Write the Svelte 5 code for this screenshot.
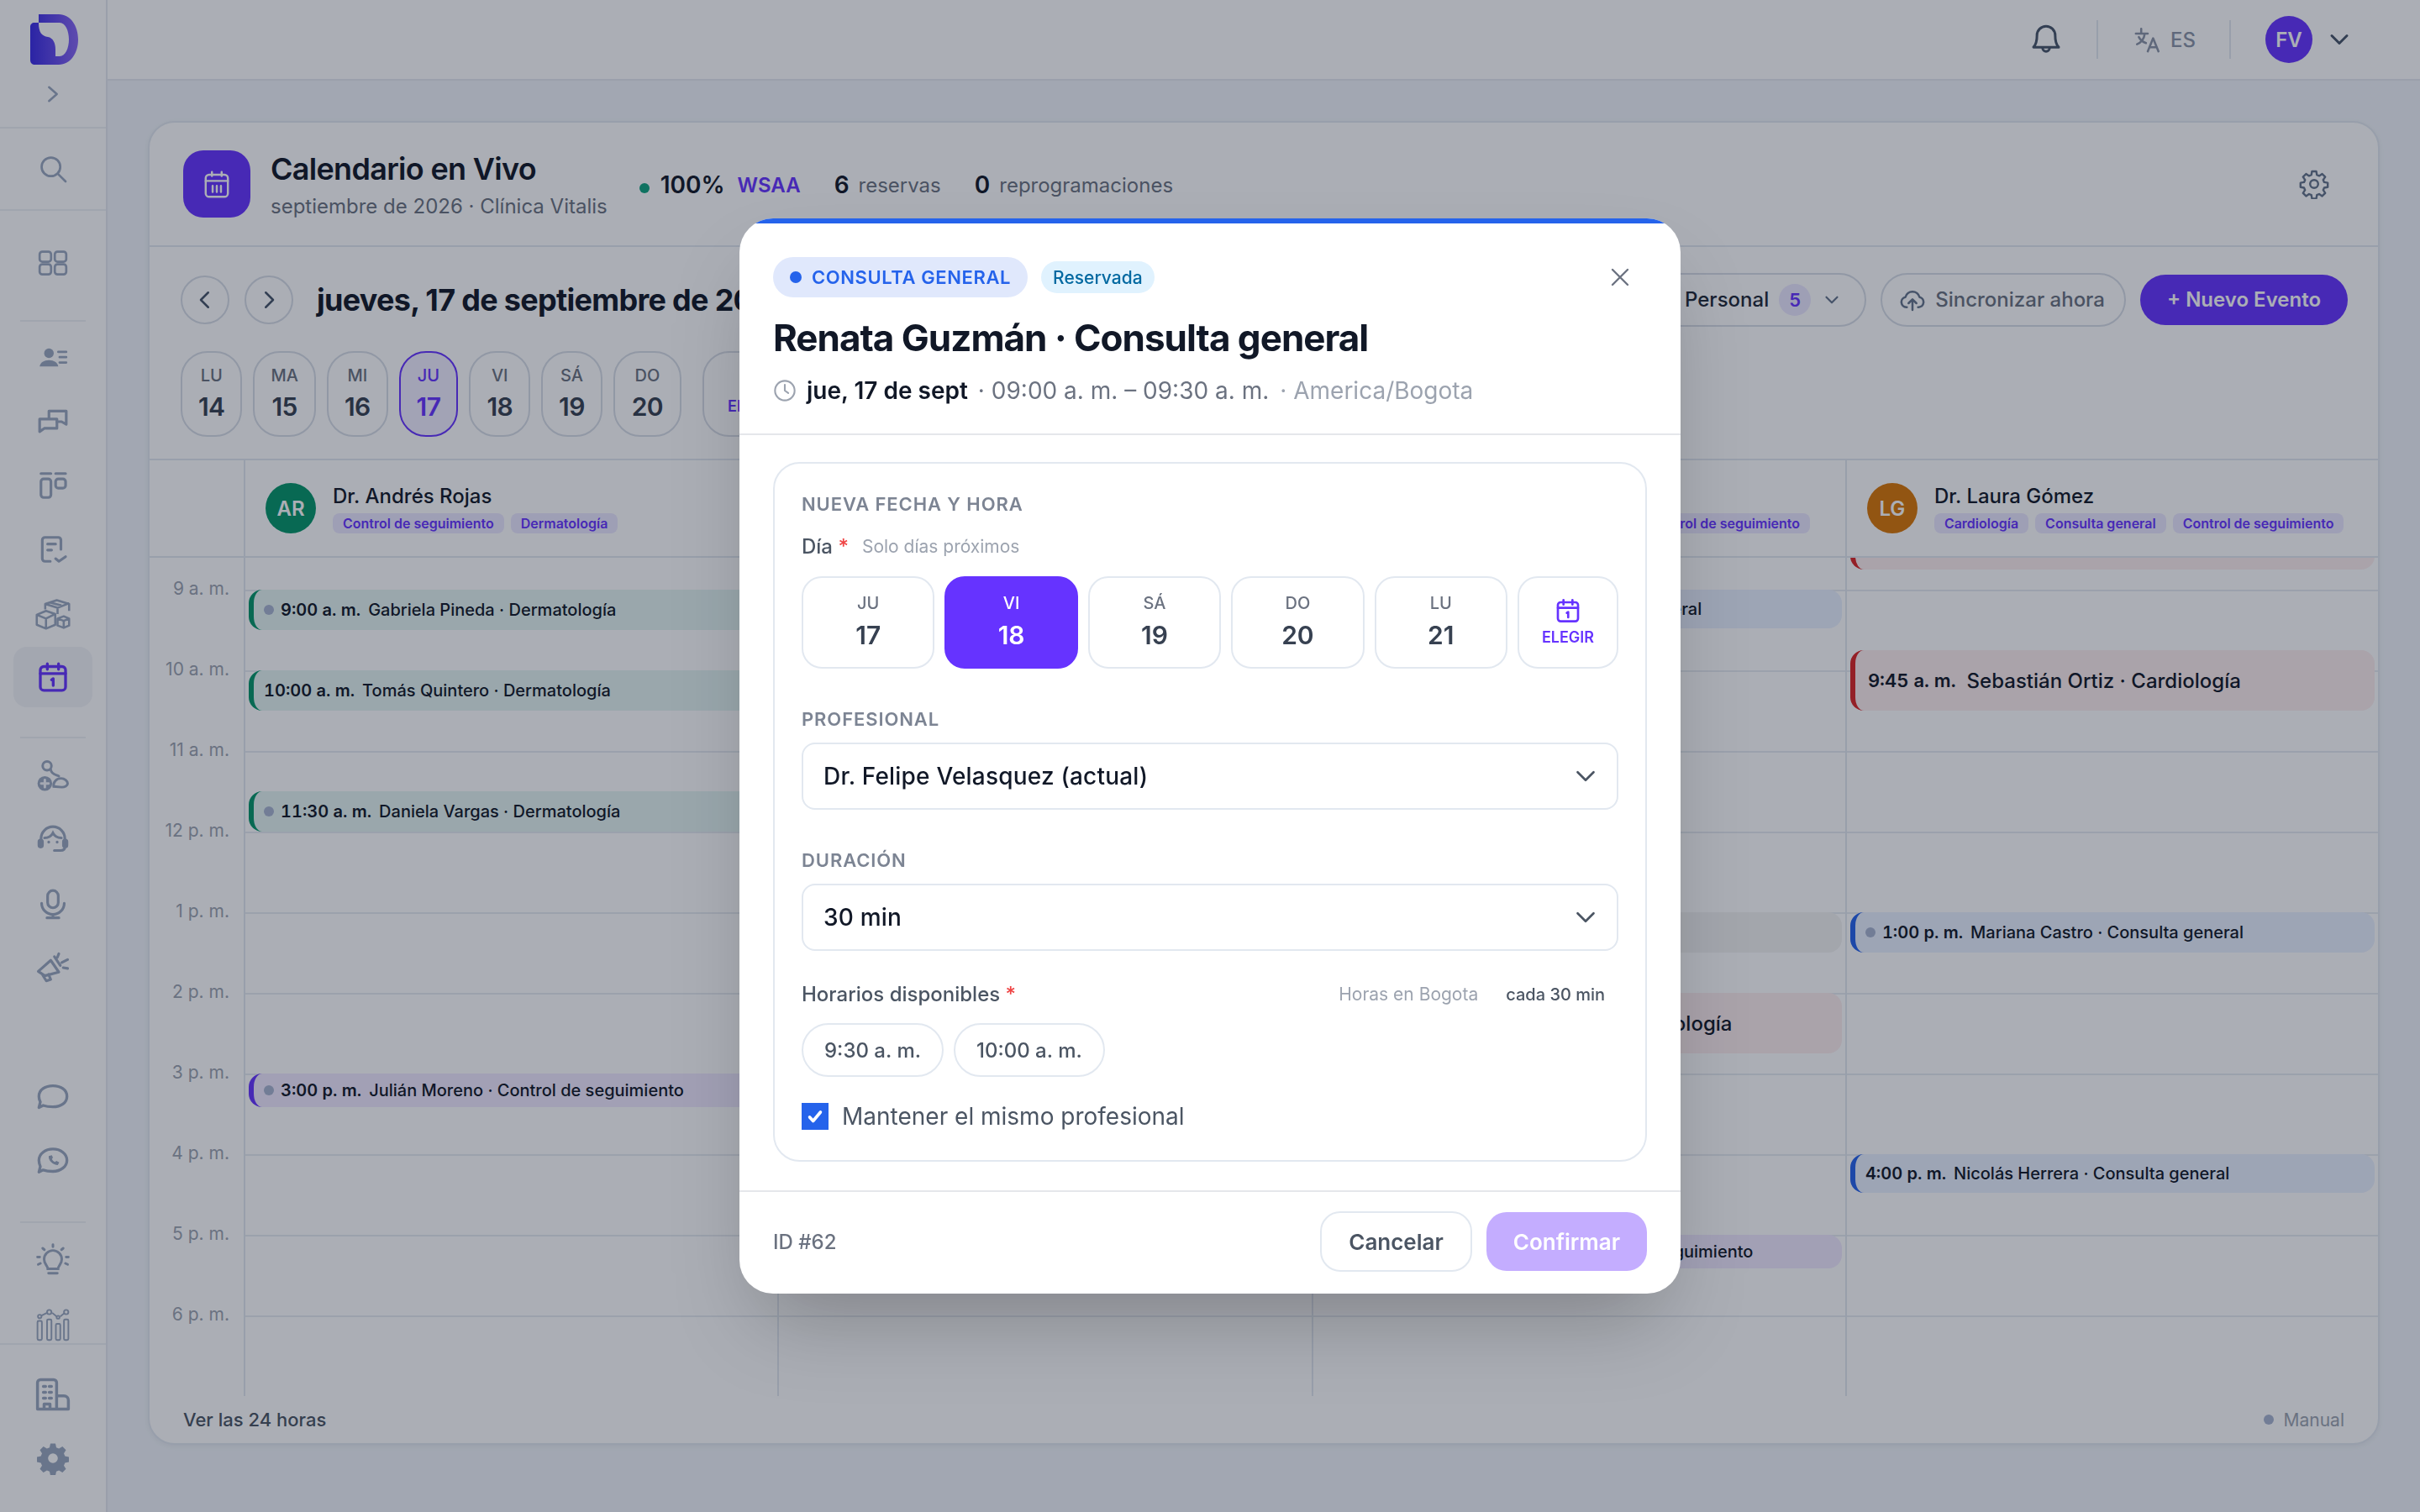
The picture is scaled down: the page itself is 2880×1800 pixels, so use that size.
<script lang="ts">
  type Ev = { at: number; mins: number; time: string; text: string; tone: string; dot?: boolean; big?: boolean };

  const START = 9;
  const HOUR = 96;
  const hours = ["9 a. m.", "10 a. m.", "11 a. m.", "12 p. m.", "1 p. m.", "2 p. m.", "3 p. m.", "4 p. m.", "5 p. m.", "6 p. m."];
  const weekDays = [
    ["LU", 14],
    ["MA", 15],
    ["MI", 16],
    ["JU", 17],
    ["VI", 18],
    ["SÁ", 19],
    ["DO", 20]
  ];
  const pickDays = [
    ["JU", 17],
    ["VI", 18],
    ["SÁ", 19],
    ["DO", 20],
    ["LU", 21]
  ];

  const columns: { initials: string; color: string; name: string; tags: string[]; events: Ev[] }[] = [
    {
      initials: "AR",
      color: "#059669",
      name: "Dr. Andrés Rojas",
      tags: ["Control de seguimiento", "Dermatología"],
      events: [
        { at: 9, mins: 30, time: "9:00 a. m.", text: "Gabriela Pineda · Dermatología", tone: "green", dot: true },
        { at: 10, mins: 30, time: "10:00 a. m.", text: "Tomás Quintero · Dermatología", tone: "green" },
        { at: 11.5, mins: 30, time: "11:30 a. m.", text: "Daniela Vargas · Dermatología", tone: "green", dot: true },
        { at: 15, mins: 25, time: "3:00 p. m.", text: "Julián Moreno · Control de seguimiento", tone: "purple", dot: true }
      ]
    },
    {
      initials: "FV",
      color: "#6633ff",
      name: "Dr. Felipe Velasquez",
      tags: ["Consulta general"],
      events: [{ at: 9, mins: 30, time: "9:00 a. m.", text: "Renata Guzmán · Consulta general", tone: "blue" }]
    },
    {
      initials: "CT",
      color: "#2563eb",
      name: "Dra. Camila Torres",
      tags: ["Cardiología", "Consulta general", "Control de seguimiento"],
      events: [
        { at: 9, mins: 29, time: "9:00 a. m.", text: "Paula Benavides · Consulta general", tone: "blue" },
        { at: 13, mins: 30, time: "1:00 p. m.", text: "", tone: "gray" },
        { at: 14, mins: 45, time: "2:00 p. m.", text: "Mateo Hernández · Cardiología", tone: "red", big: true },
        { at: 17, mins: 25, time: "5:00 p. m.", text: "Lucía Fernández · Control de seguimiento", tone: "purple" }
      ]
    },
    {
      initials: "LG",
      color: "#d97706",
      name: "Dr. Laura Gómez",
      tags: ["Cardiología", "Consulta general", "Control de seguimiento"],
      events: [
        { at: 8, mins: 45, time: "8:00 a. m.", text: "", tone: "red", big: true },
        { at: 9.75, mins: 45, time: "9:45 a. m.", text: "Sebastián Ortiz · Cardiología", tone: "red", big: true },
        { at: 13, mins: 30, time: "1:00 p. m.", text: "Mariana Castro · Consulta general", tone: "blue", dot: true },
        { at: 16, mins: 29, time: "4:00 p. m.", text: "Nicolás Herrera · Consulta general", tone: "blue" }
      ]
    }
  ];

  let pickedDay = $state(18);
  let keepPro = $state(true);
  let slot = $state("");

  const topOf = (at: number) => 38 + (at - START) * HOUR;
</script>

{#snippet chevron(size: number, color: string, sw = 2)}
  <svg width={size} height={size} viewBox="0 0 24 24" fill="none" stroke={color} stroke-width={sw} stroke-linecap="round" stroke-linejoin="round"><path d="m6 9 6 6 6-6" /></svg>
{/snippet}

{#snippet calIcon(size: number, color: string, sw: number)}
  <svg width={size} height={size} viewBox="0 0 24 24" fill="none" stroke={color} stroke-width={sw} stroke-linecap="round" stroke-linejoin="round">
    <rect x="3" y="4.5" width="18" height="17" rx="2.5" />
    <path d="M8 2.5v4M16 2.5v4M3 9.5h18" />
    <path d="m11 14 1.2-.8V18" />
  </svg>
{/snippet}

<div class="app">
  <aside class="sidebar">
    <div class="brand">
      <svg class="logo" width="57" height="60" viewBox="0 0 57 60">
        <defs>
          <linearGradient id="logoFill" x1="0" x2="1" y1="0.5" y2="0.5">
            <stop offset="0" stop-color="#3a2be6" />
            <stop offset="1" stop-color="#8a68f5" />
          </linearGradient>
        </defs>
        <path fill="url(#logoFill)" fill-rule="evenodd" d="M10 0H34C48 0 57 14 57 30C57 46 48 60 34 60H6C2 60 0 58 0 54V15C0 12 2 10 5 10H10ZM10 10C10 22 14 26 21 27C27 28 30 34 30 42V50H35C42 50 46 40 46 30C46 20 42 10 35 10Z" />
      </svg>
      <svg width="28" height="28" viewBox="0 0 24 24" fill="none" stroke="#9aa8bf" stroke-width="2.200" stroke-linecap="round" stroke-linejoin="round"><path d="m8 5 8 7-8 7" /></svg>
    </div>
    <div class="search-slot">
      <svg width="38" height="38" viewBox="0 0 24 24" fill="none" stroke="#9aa8bf" stroke-width="1.7" stroke-linecap="round"><circle cx="10.5" cy="10.5" r="7" /><path d="m16 16 5.500 5.500" /></svg>
    </div>
    <nav class="nav">
      <a class="item first" href="#dash" aria-label="Inicio">
        <svg width="38" height="38" viewBox="0 0 24 24" fill="none" stroke="#9aa8bf" stroke-width="1.7"><rect x="2" y="3.5" width="8.6" height="7.6" rx="2" /><rect x="13.4" y="3.5" width="8.6" height="7.6" rx="2" /><rect x="2" y="13" width="8.6" height="7.6" rx="2" /><rect x="13.4" y="13" width="8.6" height="7.6" rx="2" /></svg>
      </a>
      <div class="sep"></div>
      <a class="item" href="#contacts" aria-label="Contactos">
        <svg width="38" height="38" viewBox="0 0 24 24" fill="none" stroke="#9aa8bf" stroke-width="1.7" stroke-linecap="round"><circle cx="9" cy="8.5" r="3.6" fill="#9aa8bf" stroke="none" /><path d="M2 18.500c.4-3 3.300-4.800 7-4.800s6.600 1.800 7 4.800z" fill="#9aa8bf" stroke="none" /><path d="M16 7.500h6M17 11.500h5M17 15.500h5" /></svg>
      </a>
      <a class="item" href="#inbox" aria-label="Conversaciones">
        <svg width="38" height="38" viewBox="0 0 24 24" fill="none" stroke="#9aa8bf" stroke-width="2" stroke-linejoin="round"><path d="M9 9.500V4h13v10l-3.500-2H14" /><path d="M15 10v7H5.500L2 19.500V10z" /></svg>
      </a>
      <a class="item" href="#board" aria-label="Tablero">
        <svg width="38" height="38" viewBox="0 0 24 24" fill="none" stroke="#9aa8bf" stroke-width="2" stroke-linecap="round"><path d="M3 3h7.500M14 3h7.500" /><rect x="3" y="7" width="7.500" height="14" rx="2" /><rect x="14" y="7" width="7.500" height="7" rx="2" /></svg>
      </a>
      <a class="item" href="#tasks" aria-label="Tareas">
        <svg width="38" height="38" viewBox="0 0 24 24" fill="none" stroke="#9aa8bf" stroke-width="2" stroke-linecap="round" stroke-linejoin="round"><path d="M10 21H6a2 2 0 0 1-2-2V5a2 2 0 0 1 2-2h10a2 2 0 0 1 2 2v7" /><path d="M8 8h6M8 12.500h3" /><path d="m14 19 2.500 2 5-3.500" /></svg>
      </a>
      <a class="item" href="#stock" aria-label="Inventario">
        <svg width="44" height="44" viewBox="0 0 24 24" fill="none" stroke="#9aa8bf" stroke-width="1.4" stroke-linejoin="round"><path d="m1.500 13 6-2.500 6 2v7l-6 2.500-6-2.500zM1.500 13l6 2.500 6-3M7.500 15.500v7" /><path d="m7 9.500 0-3.500 7.500-2.500 8 2.500v4.500M7 6l8 2.500 7.500-3M15 8.500v4M10 5l7.500 2" /><path d="m15 15.500 4-1.500 3.500 1.500v4.500L19 21.500 15 20zM15 15.500l4 1.500 3.500-1.500M19 17v4.500" /></svg>
      </a>
      <a class="item active" href="#calendar" aria-label="Calendario">
        {@render calIcon(40, "#6633ff", 2)}
      </a>
      <div class="sep mid"></div>
      <a class="item" href="#doctors" aria-label="Profesionales">
        <svg width="42" height="42" viewBox="0 0 24 24" fill="none" stroke="#9aa8bf" stroke-width="1.700" stroke-linecap="round"><circle cx="8" cy="5" r="3" /><path d="M10.500 7.500c.5 3.500 3.500 3.500 5.500 4.500" /><circle cx="6.500" cy="17" r="5" fill="#9aa8bf" stroke="none" /><path d="M4 17h5M6.500 14.500v5" stroke="#f4f6fa" /><path d="M12.500 19c-.5-3 2-5.500 5-5.500 2.500 0 4.500 2 4.500 3.500 0 1.500-2 2.500-4 2.500z" /></svg>
      </a>
      <a class="item" href="#support" aria-label="Soporte">
        <svg width="40" height="40" viewBox="0 0 24 24" fill="none" stroke="#9aa8bf" stroke-width="1.900" stroke-linecap="round"><path d="M3.500 14v-3a8.500 8.500 0 0 1 17 0v3" /><path d="M6 10.500c3 0 5-1.500 6-3.500 1 2 3 3.500 6 3.500" /><rect x="2" y="12" width="2.500" height="5" rx="1.200" fill="#9aa8bf" /><rect x="19.500" y="12" width="2.500" height="5" rx="1.200" fill="#9aa8bf" /><path d="M20.500 17c0 1.800-1.500 2.500-3 2.500H13" /><path d="M9 13.500h.01M15 13.500h.01" stroke-width="2" /></svg>
      </a>
      <a class="item" href="#voice" aria-label="Voz">
        <svg width="38" height="38" viewBox="0 0 24 24" fill="none" stroke="#9aa8bf" stroke-width="2" stroke-linecap="round"><rect x="8" y="2" width="8" height="13" rx="4" /><path d="M3.500 11.500a8.500 8.500 0 0 0 17 0M12 20v2.500M7.500 22.500h9" /></svg>
      </a>
      <a class="item" href="#campaigns" aria-label="Campañas">
        <svg width="42" height="42" viewBox="0 0 24 24" fill="none" stroke="#9aa8bf" stroke-width="1.800" stroke-linecap="round" stroke-linejoin="round"><path d="M2 14.500 10.500 7l5.500 8-9.500 2.500zM5 17l2.500 4 3-1-1.500-3.500" /><path d="M13 4.500 17 10.500M15 5l1-2.500M18 8.500l4-2M19 12l3 .5" /></svg>
      </a>
      <div class="nav-gap"></div>
      <a class="item" href="#chat" aria-label="Chat">
        <svg width="40" height="40" viewBox="0 0 24 24" fill="none" stroke="#9aa8bf" stroke-width="2" stroke-linejoin="round"><path d="M12 4c5.500 0 10 2.800 10 7.500S17.500 19 12 19c-2.200 0-5-.3-7-1l-3 1.500 1-4C2.300 14.300 2 13 2 11.500 2 6.800 6.500 4 12 4z" /></svg>
      </a>
      <a class="item" href="#whatsapp" aria-label="WhatsApp">
        <svg width="40" height="40" viewBox="0 0 24 24" fill="none" stroke="#9aa8bf" stroke-width="2" stroke-linejoin="round"><path d="M12 3.500c5.500 0 10 3.500 10 8s-4.500 8-10 8c-2.200 0-5-.3-7-1l-3 1.500 1-4C2.300 14.300 2 13 2 11.500c0-4.500 4.500-8 10-8z" /><path d="M9 8.500c-.5 3 3 6.500 6.500 6.500l1-2-2-1-1 .8c-1-.4-1.800-1.200-2.200-2.200l.7-1-.8-1.700z" fill="#9aa8bf" stroke="none" /></svg>
      </a>
      <div class="sep low"></div>
      <a class="item" href="#ideas" aria-label="Ideas">
        <svg width="42" height="42" viewBox="0 0 24 24" fill="none" stroke="#9aa8bf" stroke-width="1.700" stroke-linecap="round"><path d="M8.500 18c0-2-2.500-3-2.500-6.500a6 6 0 0 1 12 0c0 3.500-2.500 4.500-2.500 6.500z" /><path d="M9 21h6M12 1.500v1.500M5 4l1.200 1M19 4l-1.200 1M1.500 10H3M21 10h1.500M2 15l1.500-.7M22 15l-1.500-.7" /></svg>
      </a>
      <a class="item" href="#stats" aria-label="Estadísticas">
        <svg width="42" height="42" viewBox="0 0 24 24" fill="none" stroke="#9aa8bf" stroke-width="1.100" stroke-linejoin="round"><rect x="1.500" y="10" width="3" height="13" rx=".8" /><rect x="8" y="9" width="3" height="14" rx=".8" /><rect x="14" y="12" width="3" height="11" rx=".8" /><rect x="19.500" y="9" width="3" height="14" rx=".8" /><path d="m4 6.500 4-2M11.500 4.500l3 2.500M17 7l3-2.500" /><circle cx="3" cy="7" r="1.200" /><circle cx="9.500" cy="4" r="1.500" /><circle cx="15.500" cy="7.500" r="1" /><circle cx="21" cy="4" r="1.500" /></svg>
      </a>
    </nav>
    <div class="nav-bottom">
      <a class="item" href="#clinic" aria-label="Clínica">
        <svg width="42" height="42" viewBox="0 0 24 24" fill="none" stroke="#9aa8bf" stroke-width="2" stroke-linejoin="round"><path d="M1.500 22V4a2 2 0 0 1 2-2h9a2 2 0 0 1 2 2v18zM14.500 13h5a3 3 0 0 1 3 3v6h-8M6 22v-3.500h4V22" /><path d="M5.500 6.500h1.500M9.500 6.500H11M5.500 10.500h1.500M9.500 10.500H11M5.500 14.500h1.500M9.500 14.500H11" stroke-linecap="round" /></svg>
      </a>
      <a class="item" href="#settings" aria-label="Ajustes">
        <svg width="40" height="40" viewBox="0 0 24 24" fill="#9aa8bf"><path fill-rule="evenodd" d="M10.200 1.500h3.600l.6 2.800 1.900.8 2.500-1.500 2.500 2.500-1.500 2.500.8 1.900 2.800.6v3.600l-2.800.6-.8 1.900 1.500 2.500-2.500 2.500-2.500-1.500-1.900.8-.6 2.800h-3.600l-.6-2.800-1.900-.8-2.500 1.500-2.500-2.500 1.500-2.500-.8-1.900-2.800-.6v-3.600l2.800-.6.8-1.900-1.500-2.500 2.500-2.500 2.500 1.500 1.900-.8zM12 8.500a3.500 3.500 0 1 0 0 7 3.500 3.500 0 0 0 0-7z" /></svg>
      </a>
    </div>
  </aside>

  <div class="main">
    <header class="topbar">
      <svg width="40" height="40" viewBox="0 0 24 24" fill="none" stroke="#475569" stroke-width="1.800" stroke-linecap="round" stroke-linejoin="round"><path d="M12 2.500a6.500 6.500 0 0 0-6.500 6.500c0 5-1 7-2.500 8.500h18c-1.500-1.500-2.500-3.500-2.500-8.500A6.500 6.500 0 0 0 12 2.500z" /><path d="M9.500 18a2.500 2.500 0 0 0 5 0" /></svg>
      <span class="bar-sep"></span>
      <div class="lang">
        <svg width="34" height="34" viewBox="0 0 24 24" fill="none" stroke="#8a94a6" stroke-width="1.800" stroke-linecap="round" stroke-linejoin="round"><path d="M2 7h10M6.500 3v4M3 16c3.500-1.500 6-5 6.500-9M4.500 10c1 2 3 4 6 5" /><path d="m12 22 4.500-11 4.500 11M13.500 18.500h6" /></svg>
        <span>ES</span>
      </div>
      <span class="bar-sep second"></span>
      <span class="me">FV</span>
      {@render chevron(36, "#475569")}
    </header>

    <div class="content">
      <section class="card">
        <div class="card-head">
          <div class="head-icon">
            <svg width="30" height="33" viewBox="0 0 18 20" fill="none" stroke="#fff" stroke-width="1.500" stroke-linecap="round" stroke-linejoin="round"><rect x="1" y="3" width="16" height="16" rx="2.500" /><path d="M5.500 1v3M12.500 1v3M1 7.500h16M6 11v4.500M9 11v4.500M12 11v4.500" /></svg>
          </div>
          <div class="head-copy">
            <h1>Calendario en Vivo</h1>
            <p>septiembre de 2026 · Clínica Vitalis</p>
          </div>
          <div class="stats">
            <span class="live-dot"></span>
            <b class="pct">100%</b>
            <b class="wsaa">WSAA</b>
            <b class="num">6</b>
            <span class="lbl">reservas</span>
            <b class="num">0</b>
            <span class="lbl">reprogramaciones</span>
          </div>
          <svg class="head-gear" width="36" height="36" viewBox="0 0 24 24" fill="none" stroke="#64748b" stroke-width="1.600" stroke-linejoin="round"><path d="M10.300 2h3.400l.5 2.800 1.800.8 2.400-1.600 2.400 2.400-1.600 2.400.8 1.800 2.800.5v3.400l-2.800.5-.8 1.800 1.600 2.400-2.400 2.400-2.400-1.600-1.800.8-.5 2.800h-3.400l-.5-2.800-1.800-.8-2.400 1.600-2.400-2.400 1.600-2.400-.8-1.800-2.800-.5v-3.400l2.800-.5.8-1.800-1.600-2.400 2.400-2.400 2.400 1.600 1.800-.8z" /><circle cx="12" cy="12" r="3.200" /></svg>
        </div>

        <div class="toolbar">
          <div class="tool-row">
            <div class="tool-left">
              <button class="round" type="button" aria-label="Anterior">
                <svg width="30" height="30" viewBox="0 0 24 24" fill="none" stroke="#475569" stroke-width="2" stroke-linecap="round" stroke-linejoin="round"><path d="m15 5-7 7 7 7" /></svg>
              </button>
              <button class="round" type="button" aria-label="Siguiente">
                <svg width="30" height="30" viewBox="0 0 24 24" fill="none" stroke="#475569" stroke-width="2" stroke-linecap="round" stroke-linejoin="round"><path d="m9 5 7 7-7 7" /></svg>
              </button>
              <h2>jueves, 17 de septiembre de 2026</h2>
            </div>
            <div class="tool-right">
              <div class="pill staff">
                <span>Personal</span>
                <b>5</b>
                {@render chevron(26, "#64748b")}
              </div>
              <div class="pill sync">
                <svg width="32" height="32" viewBox="0 0 24 24" fill="none" stroke="#64748b" stroke-width="1.900" stroke-linecap="round" stroke-linejoin="round"><path d="M7 18.500H6.500a4.500 4.500 0 0 1-.8-8.900 6.500 6.500 0 0 1 12.600 0 4.500 4.500 0 0 1-.8 8.900H17" /><path d="M12 21v-9M8.500 15l3.500-3.500 3.500 3.500" /></svg>
                <span>Sincronizar ahora</span>
              </div>
              <button class="new-event" type="button">+ Nuevo Evento</button>
            </div>
          </div>
          <div class="week">
            {#each weekDays as [label, num]}
              <div class="wday" class:now={num === 17} class:wide={num === 20}>
                <small>{label}</small>
                <b>{num}</b>
              </div>
            {/each}
            <div class="wday pick">
              {@render calIcon(28, "#6633ff", 2)}
              <small>ELEGIR</small>
            </div>
          </div>
        </div>

        <div class="sched-head">
          <div class="corner"></div>
          {#each columns as col}
            <div class="who">
              <span class="avatar" style="background: {col.color}">{col.initials}</span>
              <div>
                <div class="who-name">{col.name}</div>
                <div class="tags">
                  {#each col.tags as tag}
                    <span>{tag}</span>
                  {/each}
                </div>
              </div>
            </div>
          {/each}
        </div>

        <div class="sched-body">
          <div class="gutter">
            {#each hours as hour}
              <div class="hour">{hour}</div>
            {/each}
          </div>
          {#each columns as col}
            <div class="col">
              {#each hours as hour}
                <div class="line" title={hour}></div>
              {/each}
              {#each col.events as ev}
                <div
                  class="event {ev.tone}"
                  class:big={ev.big}
                  style="top: {topOf(ev.at)}px; height: {(ev.mins / 60) * HOUR}px"
                >
                  {#if ev.text}
                    {#if ev.dot}<i></i>{/if}
                    <b>{ev.time}</b>
                    <span>{ev.text}</span>
                  {/if}
                </div>
              {/each}
            </div>
          {/each}
        </div>

        <div class="card-foot">
          <span class="see-all">Ver las 24 horas</span>
          <span class="legend"><i></i>Manual</span>
        </div>
      </section>
    </div>
  </div>
</div>

<div class="backdrop">
  <div class="modal" role="dialog" aria-modal="true">
    <div class="accent"></div>
    <div class="m-head">
      <div class="m-top">
        <span class="type"><i></i>CONSULTA GENERAL</span>
        <span class="state">Reservada</span>
        <button class="close" type="button" aria-label="Cerrar">
          <svg width="36" height="36" viewBox="0 0 24 24" fill="none" stroke="#6b7280" stroke-width="1.600" stroke-linecap="round"><path d="M6 6l12 12M18 6 6 18" /></svg>
        </button>
      </div>
      <h3>Renata Guzmán · Consulta general</h3>
      <div class="when">
        <svg width="28" height="28" viewBox="0 0 24 24" fill="none" stroke="#9ca3af" stroke-width="1.800" stroke-linecap="round" stroke-linejoin="round"><circle cx="12" cy="12" r="10" /><path d="M12 6v6l3.500 2.500" /></svg>
        <b>jue, 17 de sept</b>
        <span class="hours">· 09:00 a. m. – 09:30 a. m.</span>
        <span class="tz">· America/Bogota</span>
      </div>
    </div>

    <div class="m-body">
      <div class="panel">
        <div class="caps">NUEVA FECHA Y HORA</div>
        <div class="field-head">
          <span class="field-name">Día <em>*</em></span>
          <span class="hint">Solo días próximos</span>
        </div>
        <div class="days">
          {#each pickDays as [label, num]}
            <button class="day" class:on={pickedDay === num} type="button" onclick={() => (pickedDay = Number(num))}>
              <small>{label}</small>
              <b>{num}</b>
            </button>
          {/each}
          <button class="day choose" type="button">
            {@render calIcon(32, "#6633ff", 2)}
            <small>ELEGIR</small>
          </button>
        </div>

        <div class="caps gap-big">PROFESIONAL</div>
        <div class="select">
          <span>Dr. Felipe Velasquez (actual)</span>
          {@render chevron(38, "#4b5563", 1.7)}
        </div>

        <div class="caps gap-big">DURACIÓN</div>
        <div class="select">
          <span>30 min</span>
          {@render chevron(38, "#4b5563", 1.7)}
        </div>

        <div class="slots-head">
          <span class="field-name">Horarios disponibles <em>*</em></span>
          <span class="slots-meta"><span class="hint">Horas en Bogota</span><span class="every">cada 30 min</span></span>
        </div>
        <div class="slots">
          <button class="slot" class:on={slot === "9:30"} type="button" onclick={() => (slot = "9:30")}>9:30 a. m.</button>
          <button class="slot" class:on={slot === "10:00"} type="button" onclick={() => (slot = "10:00")}>10:00 a. m.</button>
        </div>

        <button class="keep" type="button" onclick={() => (keepPro = !keepPro)}>
          <span class="box" class:off={!keepPro}>
            {#if keepPro}
              <svg width="22" height="22" viewBox="0 0 24 24" fill="none" stroke="#fff" stroke-width="4" stroke-linecap="round" stroke-linejoin="round"><path d="m5 13 4.500 5L19 6.500" /></svg>
            {/if}
          </span>
          Mantener el mismo profesional
        </button>
      </div>
    </div>

    <div class="m-foot">
      <span class="id">ID #62</span>
      <div class="actions">
        <button class="cancel" type="button">Cancelar</button>
        <button class="confirm" type="button" disabled>Confirmar</button>
      </div>
    </div>
  </div>
</div>

<style>
  :global(body) {
    margin: 0;
    background: #f1f5fa;
  }

  * {
    box-sizing: border-box;
  }

  .app,
  .backdrop,
  button {
    font-family: Inter, "Noto Sans", sans-serif;
  }

  button {
    cursor: pointer;
  }

  .app {
    display: flex;
    height: 100vh;
    overflow: hidden;
    color: #111827;
  }

  /* sidebar */
  .sidebar {
    width: 128px;
    flex: 0 0 128px;
    height: 100vh;
    display: flex;
    flex-direction: column;
    background: #fff;
    border-right: 2px solid #e5e9f0;
  }

  .brand {
    height: 153px;
    flex: 0 0 153px;
    display: flex;
    flex-direction: column;
    align-items: center;
    padding-top: 17px;
    gap: 21px;
    border-bottom: 2px solid #eef1f5;
  }

  .logo {
    margin-left: 2px;
  }

  .search-slot {
    height: 98px;
    flex: 0 0 98px;
    display: flex;
    align-items: center;
    justify-content: center;
    border-bottom: 2px solid #eef1f5;
  }

  .nav {
    flex: 1;
    min-height: 0;
    overflow: hidden;
    display: flex;
    flex-direction: column;
    gap: 4px;
    padding: 26px 16px 0;
  }

  .item {
    flex: 0 0 72px;
    height: 72px;
    display: flex;
    align-items: center;
    justify-content: center;
    border-radius: 16px;
  }

  .item.active {
    background: #f3f4f8;
  }

  .sep {
    flex: 0 0 2px;
    margin: 28px 8px 3px;
    background: #eef1f5;
  }

  .sep.mid {
    margin: 31px 8px 5px;
  }

  .sep.low {
    margin: 32px 8px 4px;
  }

  .nav-gap {
    flex: 0 0 74px;
  }

  .nav-bottom {
    flex: 0 0 201px;
    display: flex;
    flex-direction: column;
    gap: 4px;
    padding: 23px 16px 0;
    border-top: 2px solid #eef1f5;
  }

  /* top bar */
  .main {
    flex: 1;
    min-width: 0;
    display: flex;
    flex-direction: column;
  }

  .topbar {
    height: 96px;
    flex: 0 0 96px;
    display: flex;
    align-items: center;
    justify-content: flex-end;
    padding-right: 78px;
    background: #fff;
    border-bottom: 2px solid #e5e9f0;
  }

  .bar-sep {
    width: 2px;
    height: 46px;
    margin: 0 42px 0 40px;
    background: #e2e8f0;
  }

  .bar-sep.second {
    margin: 0 41px 0 40px;
  }

  .lang {
    display: flex;
    align-items: center;
    gap: 10px;
    font-size: 24px;
    font-weight: 500;
    color: #8a94a6;
  }

  .me {
    width: 56px;
    height: 56px;
    margin-right: 14px;
    border-radius: 50%;
    display: flex;
    align-items: center;
    justify-content: center;
    background: #6633ff;
    color: #fff;
    font-size: 24px;
    font-weight: 600;
  }

  /* main card */
  .content {
    flex: 1;
    min-height: 0;
    display: flex;
    padding: 48px 48px 80px;
  }

  .card {
    flex: 1;
    min-width: 0;
    display: flex;
    flex-direction: column;
    background: #fff;
    border: 2px solid #e2e8f0;
    border-radius: 32px;
    overflow: hidden;
    box-shadow: 0 2px 6px rgba(15, 23, 42, 0.05);
  }

  .card-head {
    height: 148px;
    flex: 0 0 148px;
    display: flex;
    align-items: center;
    padding: 0 58px 0 40px;
    border-bottom: 2px solid #e2e8f0;
  }

  .head-icon {
    width: 80px;
    height: 80px;
    display: flex;
    align-items: center;
    justify-content: center;
    border-radius: 24px;
    background: #6633ff;
  }

  .head-copy {
    margin: 4px 0 0 24px;
  }

  h1 {
    margin: 0;
    font-size: 36px;
    line-height: 46px;
    font-weight: 600;
    letter-spacing: -0.7px;
  }

  .head-copy p {
    margin: 4px 0 0;
    font-size: 24px;
    line-height: 36px;
    color: #6b7280;
  }

  .stats {
    display: flex;
    align-items: center;
    margin: 2px 0 0 38px;
    font-size: 24px;
  }

  .live-dot {
    width: 12px;
    height: 12px;
    margin: 8px 13px 0 0;
    border-radius: 50%;
    background: #10a37f;
  }

  .pct,
  .num {
    font-size: 28px;
    font-weight: 600;
  }

  .wsaa {
    margin: 0 40px 0 15px;
    color: #6633ff;
    font-size: 24px;
    font-weight: 600;
  }

  .lbl {
    margin: 0 40px 0 11px;
    color: #6b7280;
  }

  .head-gear {
    margin-left: auto;
  }

  .toolbar {
    flex: 0 0 254px;
    padding: 30px 36px 0 37px;
    border-bottom: 2px solid #e2e8f0;
  }

  .tool-row {
    height: 65px;
    display: flex;
    align-items: center;
    justify-content: space-between;
  }

  .tool-left {
    display: flex;
    align-items: center;
    gap: 18px;
    min-width: 0;
  }

  .round {
    width: 58px;
    height: 58px;
    padding: 0;
    display: flex;
    align-items: center;
    justify-content: center;
    border-radius: 50%;
    border: 2px solid #d8dde6;
    background: #fff;
  }

  h2 {
    margin: 0 0 0 10px;
    font-size: 36px;
    font-weight: 700;
    letter-spacing: -0.7px;
    white-space: nowrap;
  }

  .tool-right {
    display: flex;
    align-items: center;
    gap: 17px;
  }

  .pill {
    height: 64px;
    display: flex;
    align-items: center;
    border: 2px solid #d8dde6;
    border-radius: 32px;
    font-size: 24px;
    font-weight: 500;
    white-space: nowrap;
  }

  .staff {
    padding: 0 26px 0 180px;
    gap: 12px;
    color: #1f2937;
  }

  .staff b {
    width: 38px;
    height: 38px;
    display: flex;
    align-items: center;
    justify-content: center;
    border-radius: 50%;
    background: #ece8ff;
    color: #6633ff;
    font-size: 22px;
    font-weight: 600;
  }

  .sync {
    padding: 0 23px 0 20px;
    gap: 11px;
    color: #6b7280;
  }

  .new-event {
    height: 60px;
    padding: 0 32px;
    border: 0;
    border-radius: 30px;
    background: #6633ff;
    color: #fff;
    font-size: 24px;
    font-weight: 600;
    white-space: nowrap;
  }

  .week {
    display: flex;
    gap: 13px;
    margin-top: 29px;
  }

  .wday {
    height: 102px;
    padding: 0 19px;
    display: flex;
    flex-direction: column;
    align-items: center;
    justify-content: center;
    gap: 6px;
    border: 2px solid #d8dde6;
    border-radius: 32px;
  }

  .wday.wide {
    padding: 0 20px;
  }

  .wday small {
    font-size: 20px;
    line-height: 24px;
    font-weight: 500;
    color: #6b7280;
  }

  .wday b {
    font-size: 30px;
    line-height: 38px;
    font-weight: 600;
    letter-spacing: -0.6px;
    color: #374151;
  }

  .wday.now {
    border-color: #6633ff;
    background: #f1eeff;
  }

  .wday.now small,
  .wday.now b {
    color: #6633ff;
  }

  .wday.pick {
    margin-left: 12px;
    padding: 0 28px;
    gap: 2px;
  }

  .wday.pick small {
    font-size: 18px;
    font-weight: 600;
    color: #6633ff;
  }

  /* schedule */
  .sched-head {
    flex: 0 0 116px;
    display: grid;
    grid-template-columns: 112px repeat(3, 635.3px) 1fr;
    border-bottom: 2px solid #e2e8f0;
  }

  .who {
    min-width: 0;
    display: flex;
    align-items: center;
    gap: 20px;
    padding-left: 24px;
    border-left: 2px solid #e2e8f0;
  }

  .avatar {
    width: 60px;
    height: 60px;
    flex: 0 0 60px;
    display: flex;
    align-items: center;
    justify-content: center;
    border-radius: 50%;
    color: #fff;
    font-size: 24px;
    font-weight: 600;
  }

  .who-name {
    font-size: 24px;
    line-height: 30px;
    font-weight: 500;
    white-space: nowrap;
  }

  .tags {
    display: flex;
    gap: 8px;
    margin-top: 5px;
  }

  .tags span {
    height: 24px;
    padding: 0 12px;
    display: flex;
    align-items: center;
    border-radius: 8px;
    background: #ece8ff;
    color: #6633ff;
    font-size: 16px;
    font-weight: 600;
    white-space: nowrap;
  }

  .sched-body {
    flex: 1;
    min-height: 0;
    overflow: hidden;
    display: grid;
    grid-template-columns: 112px repeat(3, 635.3px) 1fr;
  }

  .gutter {
    padding-top: 20px;
  }

  .hour {
    height: 96px;
    padding-right: 17px;
    text-align: right;
    font-size: 21px;
    line-height: 34px;
    color: #9ca3af;
  }

  .col {
    position: relative;
    min-width: 0;
    padding-top: 38px;
    border-left: 2px solid #e2e8f0;
  }

  .line {
    height: 96px;
    border-top: 2px solid #e7ebf1;
  }

  .event {
    position: absolute;
    left: 4px;
    right: 4px;
    display: flex;
    align-items: center;
    padding-left: 12px;
    border-left: 6px solid;
    border-radius: 16px;
    overflow: hidden;
    font-size: 20px;
    color: #111827;
    white-space: nowrap;
  }

  .event i {
    width: 12px;
    height: 12px;
    margin: 0 8px 0 0;
    border-radius: 50%;
    background: #a8b4d0;
  }

  .event b {
    font-weight: 600;
    font-variant-numeric: tabular-nums;
    margin-right: 9px;
  }

  .event span {
    font-weight: 500;
  }

  .event.big {
    padding-left: 15px;
    font-size: 24px;
  }

  .event.big b {
    font-size: 22px;
    margin-right: 13px;
  }

  .event.green {
    border-color: #059669;
    background: #e5f5f2;
  }

  .event.purple {
    border-color: #6633ff;
    background: #f1eaff;
  }

  .event.blue {
    border-color: #2563eb;
    background: #eaf1ff;
  }

  .event.red {
    border-color: #dc2626;
    background: #fdeeef;
  }

  .event.gray {
    border-color: #94a3b8;
    background: #f3f3f2;
  }

  .card-foot {
    flex: 0 0 56px;
    display: flex;
    align-items: center;
    justify-content: space-between;
    padding: 0 40px;
    font-size: 22px;
  }

  .see-all {
    font-weight: 500;
    color: #4b5563;
  }

  .legend {
    display: flex;
    align-items: center;
    gap: 12px;
    color: #9ca3af;
    font-size: 21px;
  }

  .legend i {
    width: 12px;
    height: 12px;
    border-radius: 50%;
    background: #a8b4d0;
  }

  /* modal */
  .backdrop {
    position: fixed;
    inset: 0;
    display: flex;
    align-items: center;
    justify-content: center;
    background: rgba(15, 23, 42, 0.35);
  }

  .modal {
    width: 1120px;
    height: 1280px;
    display: flex;
    flex-direction: column;
    overflow: hidden;
    border-radius: 40px;
    background: #fff;
    box-shadow: 0 50px 100px -24px rgba(0, 0, 0, 0.25);
    color: #111827;
  }

  .accent {
    flex: 0 0 6px;
    background: #2563eb;
  }

  .m-head {
    flex: 0 0 252px;
    padding: 40px 40px 0;
    border-bottom: 2px solid #e5e7eb;
  }

  .m-top {
    display: flex;
    align-items: center;
    gap: 16px;
    height: 48px;
  }

  .type {
    height: 48px;
    padding: 0 20px;
    display: flex;
    align-items: center;
    gap: 12px;
    border-radius: 24px;
    background: #e0e8fc;
    color: #2563eb;
    font-size: 22px;
    font-weight: 600;
    letter-spacing: 0.6px;
  }

  .type i {
    width: 14px;
    height: 14px;
    border-radius: 50%;
    background: #2563eb;
  }

  .state {
    height: 38px;
    padding: 0 14px;
    display: flex;
    align-items: center;
    border-radius: 19px;
    background: #e0f2fe;
    color: #0369a1;
    font-size: 21px;
    font-weight: 500;
  }

  .close {
    margin-left: auto;
    width: 64px;
    height: 48px;
    padding: 0;
    display: flex;
    align-items: center;
    justify-content: center;
    border: 0;
    background: none;
  }

  h3 {
    margin: 20px 0 0;
    font-size: 44px;
    line-height: 56px;
    font-weight: 700;
    letter-spacing: -1px;
  }

  .when {
    display: flex;
    align-items: center;
    margin-top: 17px;
    height: 36px;
    font-size: 28px;
    color: #6b7280;
  }

  .when svg {
    margin-right: 12px;
  }

  .when b {
    font-weight: 600;
    color: #111827;
  }

  .when .hours {
    margin-left: 12px;
  }

  .when .tz {
    margin-left: 13px;
    color: #9ca3af;
  }

  .m-body {
    flex: 1;
    min-height: 0;
    padding: 32px 40px 0;
  }

  .panel {
    height: 833px;
    padding: 32px 32px 0;
    border: 2px solid #e2e8f0;
    border-radius: 32px;
  }

  .caps {
    font-size: 22px;
    line-height: 32px;
    font-weight: 600;
    letter-spacing: 0.9px;
    color: #7c8493;
  }

  .gap-big {
    margin-top: 44px;
    margin-bottom: 12px;
  }

  .field-head {
    display: flex;
    align-items: center;
    gap: 16px;
    margin-top: 19px;
    line-height: 32px;
  }

  .field-name {
    font-size: 24px;
    font-weight: 500;
    color: #4b5563;
  }

  .field-name em {
    font-style: normal;
    color: #ef4444;
  }

  .hint {
    font-size: 21px;
    color: #9ca3af;
  }

  .days {
    display: grid;
    grid-template-columns: repeat(5, 1fr) 120px;
    gap: 12px;
    margin-top: 19px;
  }

  .day {
    height: 110px;
    padding: 0 0 2px;
    display: flex;
    flex-direction: column;
    align-items: center;
    justify-content: center;
    gap: 8px;
    border: 2px solid #e2e8f0;
    border-radius: 24px;
    background: #fff;
  }

  .day small {
    font-size: 20px;
    line-height: 24px;
    font-weight: 500;
    color: #6b7280;
  }

  .day b {
    font-size: 30px;
    line-height: 36px;
    font-weight: 600;
    color: #374151;
  }

  .day.on {
    border-color: #6633ff;
    background: #6633ff;
  }

  .day.on small,
  .day.on b {
    color: #fff;
  }

  .day.choose {
    padding: 0;
    gap: 4px;
  }

  .day.choose small {
    font-size: 18px;
    font-weight: 600;
    color: #6633ff;
  }

  .select {
    height: 80px;
    padding: 0 18px 0 24px;
    display: flex;
    align-items: center;
    justify-content: space-between;
    border: 2px solid #e2e8f0;
    border-radius: 16px;
    font-size: 28px;
    font-weight: 500;
    letter-spacing: 0.2px;
    color: #111827;
  }

  .slots-head {
    display: flex;
    align-items: center;
    justify-content: space-between;
    margin-top: 36px;
    padding-right: 16px;
    line-height: 32px;
  }

  .slots-meta {
    display: flex;
    align-items: center;
    gap: 33px;
  }

  .every {
    font-size: 20px;
    font-weight: 500;
    color: #4b5563;
  }

  .slots {
    display: flex;
    gap: 12px;
    margin-top: 18px;
  }

  .slot {
    height: 64px;
    padding: 0 25px;
    border: 2px solid #e2e8f0;
    border-radius: 32px;
    background: #fff;
    color: #4b5563;
    font-size: 24px;
    font-weight: 500;
  }

  .slot.on {
    border-color: #6633ff;
    color: #6633ff;
  }

  .keep {
    display: flex;
    align-items: center;
    gap: 16px;
    margin-top: 30px;
    padding: 0;
    border: 0;
    background: none;
    color: #4b5563;
    font-size: 28px;
    font-weight: 400;
  }

  .box {
    width: 32px;
    height: 32px;
    display: flex;
    align-items: center;
    justify-content: center;
    background: #2563eb;
  }

  .box.off {
    background: #fff;
    border: 2px solid #9ca3af;
  }

  .m-foot {
    flex: 0 0 123px;
    display: flex;
    align-items: center;
    justify-content: space-between;
    padding: 0 40px 3px;
    border-top: 2px solid #e5e7eb;
  }

  .id {
    font-size: 24px;
    font-weight: 500;
    color: #6b7280;
  }

  .actions {
    display: flex;
    align-items: center;
    gap: 17px;
  }

  .cancel {
    height: 72px;
    padding: 0 32px;
    border: 2px solid #e2e8f0;
    border-radius: 24px;
    background: #fff;
    color: #4b5563;
    font-size: 26px;
    font-weight: 600;
  }

  .confirm {
    height: 70px;
    padding: 0 32px;
    border: 0;
    border-radius: 24px;
    background: #c4adff;
    color: #fff;
    font-size: 26px;
    font-weight: 600;
    cursor: not-allowed;
  }
</style>
